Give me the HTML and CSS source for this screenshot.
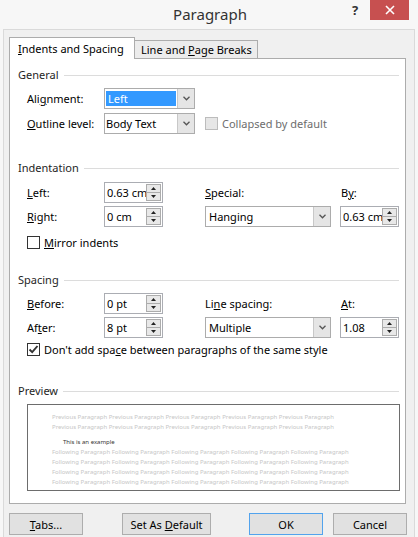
FILE: index.html
```html
<!DOCTYPE html>
<html>
<head>
<meta charset="utf-8">
<title>Paragraph</title>
<link rel="stylesheet" href="styles.css">
</head>
<body>
<div class="window">
  <div class="titlebar">
    <div class="title">Paragraph</div>
    <div class="help">?</div>
    <div class="close"><svg width="10" height="10" viewBox="0 0 10 10"><path d="M1 1 L9 9 M9 1 L1 9" stroke="#fff" stroke-width="1.6" fill="none"/></svg></div>
  </div>
  <div class="client">
    <div class="tabs">
      <div class="tab active"><span><u>I</u>ndents and Spacing</span></div>
      <div class="tab"><span>Line and <u>P</u>age Breaks</span></div>
    </div>
    <div class="panel">
      <section class="group">
        <div class="group-head"><span>General</span></div>
        <div class="general-rows">
          <div class="row">
            <span class="lbl">Ali<u>g</u>nment:</span>
            <div class="combo short">
              <span class="val"><span class="sel">Left</span></span>
              <span class="drop"><svg width="7" height="5" viewBox="0 0 7 5"><path d="M0.5 0.8 L3.5 3.8 L6.5 0.8" stroke="#555" stroke-width="1.3" fill="none"/></svg></span>
            </div>
          </div>
          <div class="row">
            <span class="lbl"><u>O</u>utline level:</span>
            <div class="combo short">
              <span class="val">Body Text</span>
              <span class="drop"><svg width="7" height="5" viewBox="0 0 7 5"><path d="M0.5 0.8 L3.5 3.8 L6.5 0.8" stroke="#555" stroke-width="1.3" fill="none"/></svg></span>
            </div>
            <div class="check disabled"><span class="box"></span><span>Collapsed by default</span></div>
          </div>
        </div>
      </section>

      <section class="group indentation">
        <div class="group-head"><span>Indentation</span></div>
        <div class="fgrid">
          <span class="lbl c1 r1"><u>L</u>eft:</span>
          <div class="spin c2 r1"><span class="num">0.63 cm</span><span class="btns"><span class="up"><svg width="5" height="3" viewBox="0 0 5 3"><path d="M0 3 L2.5 0 L5 3Z" fill="#222"/></svg></span><span class="dn"><svg width="5" height="3" viewBox="0 0 5 3"><path d="M0 0 L2.5 3 L5 0Z" fill="#222"/></svg></span></span></div>
          <span class="lbl c4 r1"><u>S</u>pecial:</span>
          <span class="lbl c6 r1">B<u>y</u>:</span>
          <span class="lbl c1 r2"><u>R</u>ight:</span>
          <div class="spin c2 r2"><span class="num">0 cm</span><span class="btns"><span class="up"><svg width="5" height="3" viewBox="0 0 5 3"><path d="M0 3 L2.5 0 L5 3Z" fill="#222"/></svg></span><span class="dn"><svg width="5" height="3" viewBox="0 0 5 3"><path d="M0 0 L2.5 3 L5 0Z" fill="#222"/></svg></span></span></div>
          <div class="combo c4 r2">
            <span class="val">Hanging</span>
            <span class="drop"><svg width="7" height="5" viewBox="0 0 7 5"><path d="M0.5 0.8 L3.5 3.8 L6.5 0.8" stroke="#555" stroke-width="1.3" fill="none"/></svg></span>
          </div>
          <div class="spin c6 r2"><span class="num">0.63 cm</span><span class="btns"><span class="up"><svg width="5" height="3" viewBox="0 0 5 3"><path d="M0 3 L2.5 0 L5 3Z" fill="#222"/></svg></span><span class="dn"><svg width="5" height="3" viewBox="0 0 5 3"><path d="M0 0 L2.5 3 L5 0Z" fill="#222"/></svg></span></span></div>
        </div>
        <div class="check mirror"><span class="box"></span><span><u>M</u>irror indents</span></div>
      </section>

      <section class="group spacing">
        <div class="group-head"><span>Spacing</span></div>
        <div class="fgrid">
          <span class="lbl c1 r1"><u>B</u>efore:</span>
          <div class="spin c2 r1"><span class="num">0 pt</span><span class="btns"><span class="up"><svg width="5" height="3" viewBox="0 0 5 3"><path d="M0 3 L2.5 0 L5 3Z" fill="#222"/></svg></span><span class="dn"><svg width="5" height="3" viewBox="0 0 5 3"><path d="M0 0 L2.5 3 L5 0Z" fill="#222"/></svg></span></span></div>
          <span class="lbl c4 r1">Li<u>n</u>e spacing:</span>
          <span class="lbl c6 r1"><u>A</u>t:</span>
          <span class="lbl c1 r2">Af<u>t</u>er:</span>
          <div class="spin c2 r2"><span class="num">8 pt</span><span class="btns"><span class="up"><svg width="5" height="3" viewBox="0 0 5 3"><path d="M0 3 L2.5 0 L5 3Z" fill="#222"/></svg></span><span class="dn"><svg width="5" height="3" viewBox="0 0 5 3"><path d="M0 0 L2.5 3 L5 0Z" fill="#222"/></svg></span></span></div>
          <div class="combo c4 r2">
            <span class="val">Multiple</span>
            <span class="drop"><svg width="7" height="5" viewBox="0 0 7 5"><path d="M0.5 0.8 L3.5 3.8 L6.5 0.8" stroke="#555" stroke-width="1.3" fill="none"/></svg></span>
          </div>
          <div class="spin c6 r2"><span class="num">1.08</span><span class="btns"><span class="up"><svg width="5" height="3" viewBox="0 0 5 3"><path d="M0 3 L2.5 0 L5 3Z" fill="#222"/></svg></span><span class="dn"><svg width="5" height="3" viewBox="0 0 5 3"><path d="M0 0 L2.5 3 L5 0Z" fill="#222"/></svg></span></span></div>
        </div>
        <div class="check dont"><span class="box"><svg width="11" height="11" viewBox="0 0 11 11"><path d="M1.5 5.5 L4.2 8.2 L9.5 2" stroke="#333" stroke-width="1.9" fill="none"/></svg></span><span>Don't add spa<u>c</u>e between paragraphs of the same style</span></div>
      </section>

      <section class="group preview-group">
        <div class="group-head"><span>Preview</span></div>
        <div class="preview">
          <div class="pline prev">Previous Paragraph Previous Paragraph Previous Paragraph Previous Paragraph Previous Paragraph</div>
          <div class="pline prev">Previous Paragraph Previous Paragraph Previous Paragraph Previous Paragraph Previous Paragraph</div>
          <div class="pline example">This is an example</div>
          <div class="pline next">Following Paragraph Following Paragraph Following Paragraph Following Paragraph Following Paragraph</div>
          <div class="pline next">Following Paragraph Following Paragraph Following Paragraph Following Paragraph Following Paragraph</div>
          <div class="pline next">Following Paragraph Following Paragraph Following Paragraph Following Paragraph Following Paragraph</div>
          <div class="pline next">Following Paragraph Following Paragraph Following Paragraph Following Paragraph Following Paragraph</div>
        </div>
      </section>
    </div>
    <div class="buttons">
      <div class="btn b-tabs"><span><u>T</u>abs...</span></div>
      <div class="btn b-default"><span>Set As <u>D</u>efault</span></div>
      <div class="btn b-ok"><span>OK</span></div>
      <div class="btn b-cancel"><span>Cancel</span></div>
    </div>
  </div>
</div>
</body>
</html>
```
FILE: styles.css
```css
* { box-sizing: border-box; }
html, body { margin: 0; padding: 0; }
body {
  width: 418px;
  height: 537px;
  overflow: hidden;
  background: #f7f7f7;
  font-family: "Noto Sans", "Open Sans", sans-serif;
  font-size: 11px;
  color: #000;
}
u { text-decoration: underline; text-underline-offset: 1px; }

.window { width: 418px; height: 537px; display: flex; flex-direction: column; }

.titlebar { height: 29px; position: relative; display: flex; justify-content: center; align-items: center; }
.title { font-size: 15px; color: #333; padding-left: 2px; margin-top: -1px; }
.help { position: absolute; left: 352px; top: 1px; font-size: 13px; font-weight: bold; color: #333; }
.close {
  position: absolute; left: 370px; top: 0; width: 39px; height: 20px;
  background: #c75050; display: flex; align-items: center; justify-content: center;
}

.client {
  flex: 1;
  margin: 0 3px;
  border: 1px solid #dadada;
  border-bottom: none;
  background: #f0f0f0;
  padding: 7px 0 0 5px;
}

.tabs { display: flex; align-items: flex-end; height: 21px; position: relative; z-index: 1; }
.tab {
  height: 18px;
  border: 1px solid #acacac;
  border-bottom: none;
  background: #ececec;
  display: flex; align-items: center;
  line-height: 16px;
  white-space: nowrap;
}
.tab.active {
  height: 22px; margin-bottom: -1px; width: 126px;
  background: #fff; padding-left: 8px; position: relative; z-index: 2;
}
.tab:not(.active) { width: 124px; margin-left: -1px; padding-left: 6px; }

.panel {
  width: 397px;
  height: 446px;
  border: 1px solid #acacac;
  background: #fff;
  padding: 8px 6px 0 8px;
}

.group-head { display: flex; align-items: center; height: 16px; line-height: 16px; color: #1e1e1e; }
.group-head::after { content: ""; flex: 1; border-top: 1px solid #dcdcdc; margin-left: 5px; }

.general-rows { margin: 5px 0 0 9px; display: flex; flex-direction: column; gap: 4px; }
.row { display: flex; align-items: center; height: 21px; }
.row .lbl { width: 77px; }

.combo {
  height: 21px; border: 1px solid #acacac; background: #fff;
  display: flex; align-items: stretch;
}
.combo.short { width: 91px; }
.combo .val { flex: 1; display: flex; align-items: center; padding-left: 3px; }
.combo .drop {
  width: 17px; background: #e5e5e5; border-left: 1px solid #c8c8c8;
  display: flex; align-items: center; justify-content: center;
}
.combo.short .val { padding: 2px 1px 2px 1px; }
.sel {
  display: flex; align-items: center; width: 100%; height: 100%;
  background: #3399ff; color: #fff; padding-left: 2px;
}

.check { display: flex; align-items: center; height: 16px; }
.check .box {
  width: 13px; height: 13px; border: 1px solid #333; background: #fff;
  margin-right: 4px; display: flex; align-items: center; justify-content: center;
}
.check.disabled { margin-left: 10px; color: #6d6d6d; }
.check.disabled .box { border-color: #bcbcbc; background: #e6e6e6; }

.indentation { margin-top: 26px; }
.spacing { margin-top: 22px; }
.preview-group { margin-top: 26px; }

.fgrid {
  display: grid;
  grid-template-columns: 77px 59px 42px 126px 9px 59px;
  grid-template-rows: 21px 21px;
  row-gap: 3px;
  margin: 6px 0 0 9px;
  align-items: center;
}
.spacing .fgrid { margin-top: 5px; }
.c1 { grid-column: 1; } .c2 { grid-column: 2; } .c4 { grid-column: 4; } .c6 { grid-column: 6; }
.r1 { grid-row: 1; } .r2 { grid-row: 2; }
.lbl.c6 { padding-left: 1px; }

.spin {
  height: 21px; border: 1px solid #abadb3; background: #fff;
  display: flex; align-items: center; padding-left: 2px;
}
.spin .num { flex: 1; white-space: nowrap; overflow: hidden; }
.spin .btns {
  width: 15px; height: 17px; margin-right: 1px;
  border: 1px solid #acacac; background: #e8e8e8;
  display: flex; flex-direction: column;
}
.spin .up, .spin .dn { flex: 1; display: flex; align-items: center; justify-content: center; }
.spin .up { border-bottom: 1px solid #acacac; }

.check.mirror { margin: 7px 0 0 9px; }
.check.dont { margin: 3px 0 0 9px; }

.preview {
  margin: 5px 0 0 9px;
  width: 373px; height: 87px;
  border: 1px solid #6d6d6d;
  padding: 7px 0 0 24px;
}
.pline { font-size: 6px; line-height: 10px; height: 10px; white-space: nowrap; color: #c6c6c6; }
.pline.example { color: #333; margin-top: 5px; padding-left: 11px; }

.buttons { display: flex; margin-top: 9px; }
.btn {
  height: 22px; width: 74px;
  border: 1px solid #adadad; background: #e1e1e1;
  display: flex; align-items: center; justify-content: center;
}
.b-default { width: 89px; margin-left: 39px; }
.b-ok { margin-left: 38px; border-color: #52a3ed; }
.b-cancel { margin-left: 10px; }
```
